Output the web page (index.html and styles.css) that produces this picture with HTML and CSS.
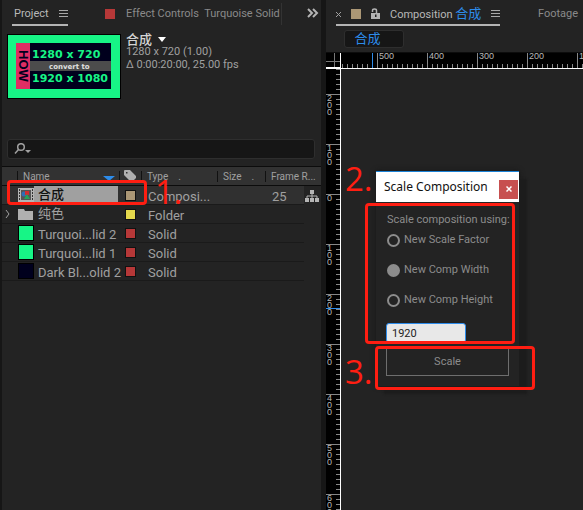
FILE: index.html
```html
<!DOCTYPE html>
<html lang="en">
<head>
<meta charset="utf-8">
<title>Scale Composition</title>
<link rel="stylesheet" href="styles.css">
</head>
<body>
<main class="workspace">
  <section class="project" aria-label="Project">
    <nav class="tabs">
      <a class="tab tab-active" href="#project">Project <svg class="menu" viewBox="0 0 9 8"><path d="M0 .5h9M0 3.5h9M0 6.5h9"/></svg></a>
      <a class="tab tab-effects" href="#effects"><i class="swatch red"></i><span class="clip">Effect Controls&nbsp; Turquoise Solid 1</span></a>
      <button class="more" aria-label="More panels"><svg viewBox="0 0 11 8"><path d="M1 0l4 4-4 4M6 0l4 4-4 4"/></svg></button>
    </nav>
    <div class="preview">
      <svg class="thumb" viewBox="0 0 114 65" role="img" aria-label="Thumbnail">
        <rect width="114" height="65" fill="#000"/>
        <rect x="1" y="1" width="112" height="63" fill="#17f586"/>
        <rect x="9" y="9" width="95" height="46" fill="#00001d"/>
        <rect x="9" y="9" width="14" height="46" fill="#df2d64"/>
        <rect x="23" y="27" width="81" height="10" fill="#4c4c4c"/>
        <text class="how" transform="translate(12 16) rotate(90)">HOW</text>
        <text class="big" x="25" y="24">1280 x 720</text>
        <text class="mid" x="42" y="35">convert to</text>
        <text class="big" x="25" y="48">1920 x 1080</text>
      </svg>
      <div class="info">
        <h1>合成 <svg viewBox="0 0 8 5"><path d="M0 0h8L4 5z"/></svg></h1>
        <p>1280 x 720 (1.00)</p>
        <p>Δ 0:00:20:00, 25.00 fps</p>
      </div>
    </div>
    <label class="search">
      <svg viewBox="0 0 18 12"><circle cx="7" cy="4" r="3.3"/><path d="M4.5 6.5L1 10.5"/><path class="solid" d="M11 7h6l-3 3z"/></svg>
      <input type="search" aria-label="Search project">
    </label>
    <table class="files">
      <colgroup><col class="c-arrow"><col class="c-name"><col class="c-label"><col class="c-type"><col class="c-size"><col class="c-rate"><col class="c-flow"></colgroup>
      <thead>
        <tr><th></th><th class="name-head"><span>Name</span><svg viewBox="0 0 12 5"><path d="M0 0h12L6 5z"/></svg></th>
        <th class="tag"><svg viewBox="0 0 12 12"><path fill-rule="evenodd" d="M0 1Q0 0 1 0h5l6 6v2L8 12H7L0 5zM2 2v1.500h1.500V2z"/></svg></th>
        <th>Type<span class="dot">.</span></th><th>Size<span class="dot">.</span></th><th colspan="2">Frame R...</th></tr>
      </thead>
      <tbody>
        <tr class="selected"><td></td><td><div class="item"><svg class="comp" viewBox="0 0 16 14"><path fill="#b4b4b4" d="M0 0h16v14H0z"/><path stroke="#333" stroke-width="1" stroke-dasharray="2 1" d="M1.500 1v12M14.500 1v12"/><path fill="#555" d="M3 2h10v10H3z"/><circle cx="6" cy="6" r="2.500" fill="#2f6fb5"/><path fill="#d02d30" d="M7 3h4v4H7z"/><path fill="#25a35a" d="M9 6l3 5H6z"/></svg><span class="label cjk">合成</span></div></td><td class="tag"><i class="swatch tan"></i></td><td>Composi...</td><td></td><td class="rate">25</td><td class="flow"><svg viewBox="0 0 14 12"><path d="M5 0h4v4H5zM0 8h4v4H0zM5 8h4v4H5zM10 8h4v4h-4z"/><path class="line" d="M7 4v4M2 8V6h10v2"/></svg></td></tr>
        <tr><td class="arrow"><svg viewBox="0 0 5 8"><path d="M1 0l3 4-3 4"/></svg></td><td><div class="item"><svg class="folder" viewBox="0 0 15 11"><path d="M0 0h6l1 2h8v9H0z"/></svg><span class="label cjk">纯色</span></div></td><td class="tag"><i class="swatch yellow"></i></td><td>Folder</td><td></td><td></td><td class="flow"></td></tr>
        <tr><td></td><td><div class="item"><i class="solid-icon green"></i><span class="label">Turquoi...lid 2</span></div></td><td class="tag"><i class="swatch red"></i></td><td>Solid</td><td></td><td></td><td class="flow"></td></tr>
        <tr><td></td><td><div class="item"><i class="solid-icon green"></i><span class="label">Turquoi...lid 1</span></div></td><td class="tag"><i class="swatch red"></i></td><td>Solid</td><td></td><td></td><td class="flow"></td></tr>
        <tr><td></td><td><div class="item"><i class="solid-icon navy"></i><span class="label">Dark Bl...olid 2</span></div></td><td class="tag"><i class="swatch red"></i></td><td>Solid</td><td></td><td></td><td class="flow"></td></tr>
      </tbody>
    </table>
  </section>

  <section class="viewer" aria-label="Composition">
    <nav class="tabs">
      <div class="tab tab-active comp-tab">
        <button class="tab-close" aria-label="Close tab"><svg viewBox="0 0 5 5"><path d="M0 0l5 5M5 0L0 5"/></svg></button>
        <i class="swatch tan"></i>
        <svg class="lock" viewBox="0 0 9 11"><path d="M1.500 4V2.500Q1.500 1 3.500 1t2 1.500V5" fill="none" stroke="#b4b4b4" stroke-width="1.500"/><path fill="#b4b4b4" fill-rule="evenodd" d="M0 5h9v6H0zM4 6.500v2.500h1.500V6.500z"/></svg>
        <a href="#comp">Composition <b>合成</b></a>
        <svg class="menu" viewBox="0 0 9 8"><path d="M0 .5h9M0 3.5h9M0 6.5h9"/></svg>
      </div>
      <a class="tab" href="#footage">Footage</a>
    </nav>
    <div class="crumbs"><button class="crumb">合成</button></div>
    <div class="stage">
      <div class="corner"></div>
      <div class="ruler-x"><span class="lead"><i class="cursor"></i></span><span>500</span><span>400</span><span>300</span><span>200</span><span>100</span></div>
      <div class="ruler-y"><span class="lead"></span><span>200</span><span>100</span><span>0</span><span>100</span><span class="marked">200</span><span>300</span><span>400</span><span>500</span><span>600</span></div>
      <div class="canvas"></div>
    </div>
  </section>
</main>

<form class="dialog" aria-label="Scale Composition">
  <header><h2>Scale Composition</h2><button type="button" class="close" aria-label="Close"><svg viewBox="0 0 6 6"><path d="M.5 .5l5 5M5.500 .5l-5 5"/></svg></button></header>
  <fieldset>
    <legend>Scale composition using:</legend>
    <label><input type="radio" name="mode">New Scale Factor</label>
    <label><input type="radio" name="mode" checked>New Comp Width</label>
    <label><input type="radio" name="mode">New Comp Height</label>
    <input class="value" type="text" value="1920" aria-label="New value">
  </fieldset>
  <button type="button" class="scale">Scale</button>
</form>

<div class="mark mark-1"></div><div class="step step-1">1.</div>
<div class="mark mark-2"></div><div class="step step-2">2.</div>
<div class="mark mark-3"></div><div class="step step-3">3.</div>
</body>
</html>
```
FILE: styles.css
```css
* { box-sizing: border-box; }
body {
  margin: 0;
  background: #161616;
  color: #a0a0a0;
  font: 11px/14px Roboto, "Noto Sans CJK SC", sans-serif;
  overflow: hidden;
}
a { color: inherit; text-decoration: none; }
button { font: inherit; color: inherit; background: none; border: 0; padding: 0; }
h1, h2, p { margin: 0; font-weight: 400; }
svg { flex: none; }

.workspace { display: grid; grid-template-columns: 319fr 257fr; gap: 5px; height: 100vh; padding-left: 2px; }
.project, .viewer { background: #232323; min-width: 0; overflow: hidden; }
.viewer { display: flex; flex-direction: column; }

.tabs { display: flex; height: 26px; align-items: stretch; white-space: nowrap; color: #8a8a8a; }
.tab { display: flex; align-items: center; padding-top: 2px; }
.tab-active { color: #b8b8b8; border-bottom: 2px solid #b4b4b4; padding-top: 4px; }
.menu { width: 9px; height: 8px; stroke: #a8a8a8; fill: none; }
.swatch { display: inline-block; flex: none; width: 10px; height: 10px; }
.red { background: #b63838; }
.tan { background: #ab9775; }
.yellow { background: #e4d84c; }

.project .tab-active { justify-content: space-between; margin-left: 10px; padding-left: 2px; width: 56px; }
.tab-effects { flex: 1; min-width: 0; margin-left: 37px; gap: 11px; }
.clip { overflow: hidden; width: 156px; border-right: 1px solid #333; line-height: 22px; }
.more { width: 11px; margin-right: 3px; }
.more svg { display: block; width: 11px; height: 8px; overflow: visible; fill: none; stroke: #b4b4b4; stroke-width: 2; }

.preview { display: flex; gap: 5px; padding: 8px 0 0 5px; }
.thumb { width: 114px; height: 65px; }
.thumb text { font-weight: 700; }
.big { font-family: "DejaVu Sans", sans-serif; font-size: 11px; fill: #17f586; }
.mid { font-family: "DejaVu Sans", sans-serif; font-size: 7px; fill: #e0e0e0; }
.how { font-family: "Liberation Sans", sans-serif; font-size: 13px; fill: #00001d; }
.info { line-height: 13px; }
.info h1 { display: flex; align-items: center; gap: 6px; font-size: 13px; line-height: 11px; color: #d4d4d4; font-weight: 500; }
.info h1 svg { width: 8px; height: 5px; fill: #fff; }

.search { display: flex; align-items: center; height: 20px; margin: 40px 6px 0 5px; padding-left: 6px; background: #161616; border: 1px solid #2e2e2e; border-radius: 3px; }
.search svg { width: 18px; height: 12px; fill: none; stroke: #a0a0a0; stroke-width: 1.5; }
.search .solid { fill: #a0a0a0; stroke: none; }
.search input { flex: 1; min-width: 0; background: none; border: 0; color: inherit; outline: 0; }

.files { width: 100%; margin-top: 7px; table-layout: fixed; border-collapse: separate; border-spacing: 0; font: 13px/14px Roboto, "Noto Sans CJK SC", sans-serif; }
.c-arrow { width: 15px; } .c-name { width: 102px; } .c-label { width: 22px; }
.c-type { width: 76px; } .c-size { width: 48px; } .c-flow { width: 17px; }
th { height: 20px; padding: 2px 0 0 6px; background: linear-gradient(#111, #111) 0 4px / 1px 11px no-repeat #323232; border-top: 1px solid #0c0c0c; border-bottom: 1px solid #0c0c0c; color: #a0a0a0; font: 10px/16px Roboto, sans-serif; text-align: left; white-space: nowrap; }
th:first-child { background: #323232; }
.name-head svg { float: right; width: 12px; height: 5px; margin: 7px 4px 0 0; fill: #2d8ceb; }
th .dot { margin-left: 10px; }
.tag { text-align: center; padding: 0; }
th.tag svg { display: block; width: 12px; height: 12px; margin: 0 auto; fill: #b0b0b0; }
td { height: 19px; padding: 0; border-bottom: 1px solid #1a1a1a; white-space: nowrap; }
td:nth-child(4) { padding: 4px 0 0 7px; }
td .swatch { display: block; width: 11px; height: 11px; margin: 0 auto; border: 1px solid #111; }
td.flow { border: 0; background: #232323; }
.selected td { background: #303030; }
.selected td.flow { background: #232323; }
.rate { padding: 4px 0 0 7px; }
.flow svg { display: block; width: 14px; height: 12px; margin-left: 1px; fill: #b4b4b4; }
.flow .line { fill: none; stroke: #b4b4b4; }
.arrow svg { display: block; width: 5px; height: 8px; margin-left: 3px; fill: none; stroke: #a0a0a0; }
.item { display: flex; align-items: center; height: 18px; padding-left: 1px; }
.item .label { flex: 1; min-width: 0; align-self: stretch; padding: 4px 0 0 4px; }
.item .cjk { font-size: 13px; padding-top: 2px; }
.comp { width: 16px; height: 14px; }
.folder { width: 15px; height: 11px; margin-right: 1px; fill: #b0b0b0; }
.selected .label { background: #a0a0a0; color: #111; font-weight: 500; margin-right: 1px; }
.solid-icon { flex: none; width: 16px; height: 16px; border: 1px solid #000; }
.green { background: #17f586; }
.navy { background: #00001d; }

.comp-tab { flex: none; width: 164px; margin: 0 38px 0 10px; gap: 10px; }
.comp-tab b, .crumb { color: #2d8ceb; font-weight: 400; font-size: 13px; }
.tab-close { display: flex; }
.tab-close svg { width: 5px; height: 5px; stroke: #a0a0a0; }
.lock { width: 9px; height: 11px; margin-top: -2px; }
.crumbs { height: 27px; padding: 4px 0 0 18px; border-bottom: 1px solid #0c0c0c; }
.crumb { display: block; width: 60px; height: 18px; padding: 0 22px 0 9px; line-height: 14px; background: #161616; border: 1px solid #2e2e2e; border-radius: 3px; }

.stage { flex: 1; min-height: 0; display: grid; grid-template: 16px 1fr / 15px 1fr; }
.corner { border-right: 1px solid #fff; border-bottom: 2px solid #fff; background: linear-gradient(#777, #777) 8px 0 / 1px 100% no-repeat, linear-gradient(#777, #777) 0 8px / 100% 1px no-repeat #000; }
.ruler-x, .ruler-y { display: flex; overflow: hidden; background: #000; color: #b8b8b8; font: 9px/7px "Liberation Sans", sans-serif; }
.ruler-x { border-bottom: 1px solid #fff; }
.ruler-x span { flex: none; width: 50px; padding-left: 2px; background: linear-gradient(#888, #888) 0 0 / 1px 100% no-repeat, repeating-linear-gradient(90deg, #888 0 1px, transparent 1px 5px) 0 100% / 100% 4px no-repeat; }
.ruler-x .lead { display: flex; justify-content: flex-end; width: 36px; padding-right: 4px; background: repeating-linear-gradient(270deg, transparent 0 4px, #888 4px 5px) 0 100% / 100% 4px no-repeat; }
.cursor { width: 1px; background: #2d8ceb; }
.ruler-y { flex-direction: column; border-right: 1px solid #fff; }
.ruler-y span { flex: none; height: 50px; padding: 1px 8px 0 1px; word-break: break-all; background: linear-gradient(#888, #888) 0 0 / 100% 1px no-repeat, repeating-linear-gradient(#888 0 1px, transparent 1px 5px) 100% 0 / 4px 100% no-repeat; }
.ruler-y .lead { height: 25px; background: repeating-linear-gradient(#888 0 1px, transparent 1px 5px) 100% 0 / 4px 100% no-repeat; }
.ruler-y .marked { background: linear-gradient(#888, #888) 0 0 / 100% 1px no-repeat, linear-gradient(#2d8ceb, #2d8ceb) 0 14px / 100% 1px no-repeat, repeating-linear-gradient(#888 0 1px, transparent 1px 5px) 100% 0 / 4px 100% no-repeat; }

.dialog { position: absolute; left: 376px; top: 171px; width: 143px; padding-bottom: 10px; background: #232323; border-top: 1px solid #1b82d6; box-shadow: 8px 8px 2px #1c1c1c, 0 0 5px #151515; }
.dialog header { display: flex; align-items: center; justify-content: space-between; height: 30px; padding: 0 1px 0 8px; background: #fff; color: #111; }
.dialog h2 { font: 12px/18px "Noto Sans", sans-serif; white-space: nowrap; }
.close { display: grid; place-items: center; width: 19px; height: 19px; margin-top: 4px; background: #c75050; }
.close svg { width: 6px; height: 6px; stroke: #fff; stroke-width: 1.5; }
fieldset { margin: 0; padding: 0 0 0 11px; border: 0; color: #8c8c8c; white-space: nowrap; }
legend { padding: 11px 0 0; line-height: 14px; }
fieldset label { display: flex; align-items: center; gap: 4px; height: 30px; }
legend + label { margin-top: -2px; }
[type="radio"] { appearance: none; width: 13px; height: 13px; margin: 0; border: 2px solid #8c8c8c; border-radius: 50%; }
[type="radio"]:checked { background: #8c8c8c; }
.value { display: block; width: 80px; height: 20px; margin: 8px 0 0 -1px; padding: 0 5px; font: inherit; color: #222; background: #e8e8e8; border: 1px solid #2d8ceb; border-radius: 3px; outline: 0; }
.scale { display: block; width: 123px; height: 28px; margin: 5px 0 0 10px; border: 1px solid #6e6e6e; color: #8c8c8c; }

.mark { position: absolute; border: 3px solid #ff1e12; border-radius: 4px; }
.mark-1 { left: 7px; top: 180px; width: 140px; height: 25px; }
.mark-2 { left: 365px; top: 203px; width: 150px; height: 141px; }
.mark-3 { left: 375px; top: 346px; width: 160px; height: 44px; }
.step { position: absolute; color: #ff1e12; font: 33px/40px "Open Sans", sans-serif; }
.step-1 { left: 155px; top: 172px; }
.step-2 { left: 345px; top: 159px; }
.step-3 { left: 345px; top: 352px; }
```
